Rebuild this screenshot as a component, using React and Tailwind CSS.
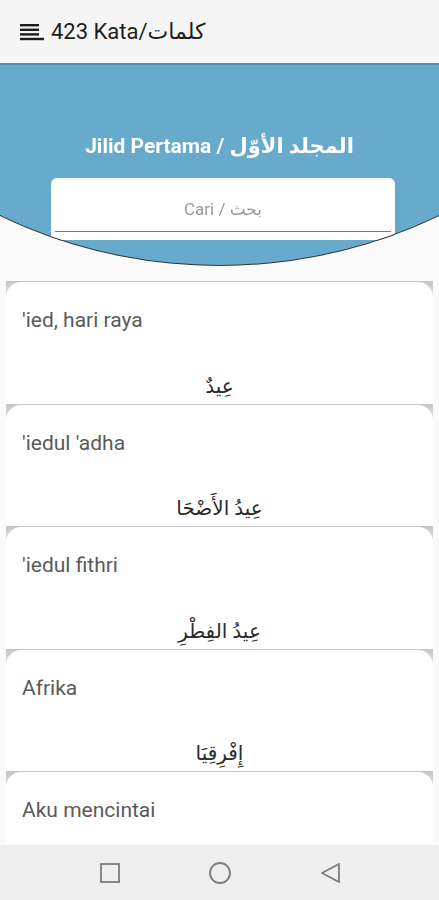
const words = [
  { id: "ied", latin: "'ied, hari raya", arab: "عِيدٌ" },
  { id: "adha", latin: "'iedul 'adha", arab: "عِيدُ الأَضْحَا" },
  { id: "fithri", latin: "'iedul fithri", arab: "عِيدُ الفِطْرِ" },
  { id: "afrika", latin: "Afrika", arab: "إِفْرِقِيَا" },
  { id: "aku", latin: "Aku mencintai", arab: null },
];

function MenuIcon() {
  return (
    <svg width="26" height="20" viewBox="0 0 26 20" className="shrink-0">
      <rect x="1" y="2" width="19" height="2.4" fill="#1c1c1c" />
      <rect x="1" y="6.6" width="19" height="2.4" fill="#1c1c1c" />
      <rect x="1" y="11.2" width="19" height="2.4" fill="#1c1c1c" />
      <rect x="1" y="15.8" width="24" height="2.4" fill="#1c1c1c" />
    </svg>
  );
}

function WordCard({ word }) {
  return (
    <div className="bg-[linear-gradient(#c4c4c4,#e2e2e2_16px,transparent_16px)] pt-px">
      <div className="flex h-[121.5px] flex-col rounded-t-[15px] bg-white px-4 pt-[26px] pb-[3px]">
        <p className="text-[21px] leading-6 text-[#5a5a5a]">{word.latin}</p>
        {word.arab && (
          <p dir="rtl" className="mt-auto text-center text-[20px] leading-[30px] text-[#2a2a2a]">
            {word.arab}
          </p>
        )}
      </div>
    </div>
  );
}

export default function App() {
  return (
    <div className="flex h-[900px] flex-col overflow-hidden bg-[#fafafa] font-['Roboto','DejaVu_Sans',sans-serif]">
      <header className="flex h-[63px] shrink-0 items-center gap-[6px] bg-[#f5f5f5] pl-[19px]">
        <MenuIcon />
        <span className="text-[22px] text-[#1e1e1e]">423 Kata/كلمات</span>
      </header>

      <div className="shrink-0 [filter:drop-shadow(0_1px_0_rgba(0,0,0,0.8))]">
        <section className="flex h-[202px] flex-col items-center border-t-2 border-[#4f92b6] bg-[#68aacc] pt-[69px] [clip-path:circle(507px_at_50%_-305px)]">
          <h1 className="text-[21px] font-bold leading-6 text-white">Jilid Pertama / المجلد الأوّل</h1>
          <div className="mt-5 ml-[7px] flex h-[62px] w-[344px] flex-col rounded-t-[6px] bg-white px-1">
            <p className="flex-1 pt-[21px] text-center text-[17px] leading-5 text-[#9a9a9a]">Cari / بحث</p>
            <div className="mb-[8px] h-[1.5px] bg-[#7a7a7a]" />
          </div>
        </section>
      </div>

      <main className="mt-4 flex-1 overflow-hidden px-[6px]">
        {words.map((w) => (
          <WordCard key={w.id} word={w} />
        ))}
      </main>

      <nav className="flex h-[55px] shrink-0 items-center justify-center gap-[86px] bg-[#eeeeee]">
        <svg width="24" height="24" viewBox="0 0 24 24">
          <rect x="3" y="3" width="18" height="18" fill="none" stroke="#7d7d7d" strokeWidth="1.8" />
        </svg>
        <svg width="24" height="24" viewBox="0 0 24 24">
          <circle cx="12" cy="12" r="10" fill="none" stroke="#7d7d7d" strokeWidth="1.8" />
        </svg>
        <svg width="24" height="24" viewBox="0 0 24 24">
          <path d="M21 3 L4 12 L21 21 Z" fill="none" stroke="#7d7d7d" strokeWidth="1.8" strokeLinejoin="round" />
        </svg>
      </nav>
    </div>
  );
}
